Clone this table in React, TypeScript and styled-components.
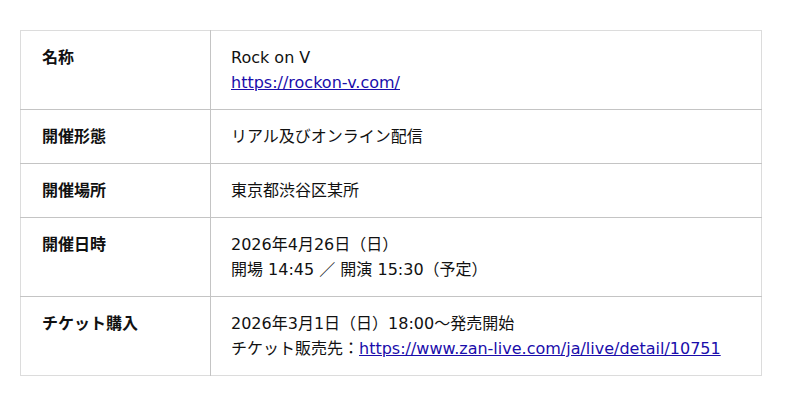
import React from 'react';
import styled, {createGlobalStyle} from 'styled-components';

const GlobalStyle = createGlobalStyle`
  html, body {
    margin: 0;
    padding: 0;
    background: #fff;
  }
  body {
    font-family: 'DejaVu Sans', 'Noto Sans CJK JP', sans-serif;
    color: #111;
  }
`

const Page = styled.div`
  padding: 30px 38px 30px 20px;
`

const InfoTable = styled.table`
  width: 742px;
  border-collapse: collapse;
  border: 1px solid #dcdcdc;
  font-size: 16px;
  line-height: 25px;

  tr + tr > td {
    border-top: 1px solid #c4c4c4;
  }
`

const Label = styled.td`
  width: 148px;
  padding: 14px 20px 14px 21px;
  font-weight: 700;
  vertical-align: top;
  border-right: 1px solid #c4c4c4;
`

const Value = styled.td`
  padding: 14px 20px;
  vertical-align: top;
`

const Line = styled.div`
  height: 25px;
  white-space: nowrap;
`

const Link = styled.a`
  color: #1a0dab;
  text-decoration: underline;
`

type Row = {
    label: string;
    lines: React.ReactNode[];
};

const rows: Row[] = [
    {
        label: '名称',
        lines: ['Rock on V', <Link href="#" key="l">https://rockon-v.com/</Link>],
    },
    {label: '開催形態', lines: ['リアル及びオンライン配信']},
    {label: '開催場所', lines: ['東京都渋谷区某所']},
    {
        label: '開催日時',
        lines: ['2026年4月26日（日）', '開場 14:45 ／ 開演 15:30（予定）'],
    },
    {
        label: 'チケット購入',
        lines: [
            '2026年3月1日（日）18:00〜発売開始',
            <span key="t">チケット販売先：<Link href="#">https://www.zan-live.com/ja/live/detail/10751</Link></span>,
        ],
    },
];

export default function App() {
    return (
        <>
            <GlobalStyle/>
            <Page>
                <InfoTable>
                    <tbody>
                    {rows.map((row) => (
                        <tr key={row.label}>
                            <Label>{row.label}</Label>
                            <Value>
                                {row.lines.map((line, i) => (
                                    <Line key={i}>{line}</Line>
                                ))}
                            </Value>
                        </tr>
                    ))}
                    </tbody>
                </InfoTable>
            </Page>
        </>
    );
}
